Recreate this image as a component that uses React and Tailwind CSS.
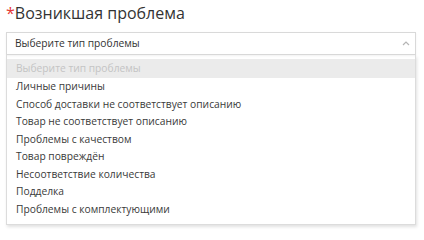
import React from "react";

const items = [
  "Личные причины",
  "Способ доставки не соответствует описанию",
  "Товар не соответствует описанию",
  "Проблемы с качеством",
  "Товар повреждён",
  "Несоответствие количества",
  "Подделка",
  "Проблемы с комплектующими",
];

export default function App() {
  return (
    <div className="w-[424px] h-[230px] bg-white overflow-hidden" style={{ fontFamily: '"Open Sans", sans-serif' }}>
      <div className="pl-[6px] pt-[1px] pr-[8px]">
        <div className="text-[16px] leading-[24px] text-[#333333]">
          <span className="text-[#e53935]">*</span>Возникшая проблема
        </div>
        <div className="mt-[7px] h-[23px] border border-[#d9d9d9] flex items-center justify-between pl-[8px] pr-[5px] text-[10.25px] text-[#333333] shadow-[0_1px_2px_rgba(0,0,0,0.06)]">
          <span>Выберите тип проблемы</span>
          <svg width="8" height="5" viewBox="0 0 8 5">
            <path d="M1 4 L4 1 L7 4" fill="none" stroke="#b5b5b5" strokeWidth="1.2" />
          </svg>
        </div>
        <div className="border border-[#dcdcdc] border-t-0 pt-[4px] pb-[6px] shadow-[1px_2px_3px_rgba(0,0,0,0.12)] text-[10.25px]">
          <div className="bg-[#ebebeb] h-[19px] leading-[19px] pl-[9px] text-[#c4c4c4]">Выберите тип проблемы</div>
          {items.map((t) => (
            <div key={t} className="h-[17.5px] leading-[17.5px] pl-[9px] text-[#3a3a3a]">{t}</div>
          ))}
        </div>
      </div>
    </div>
  );
}
